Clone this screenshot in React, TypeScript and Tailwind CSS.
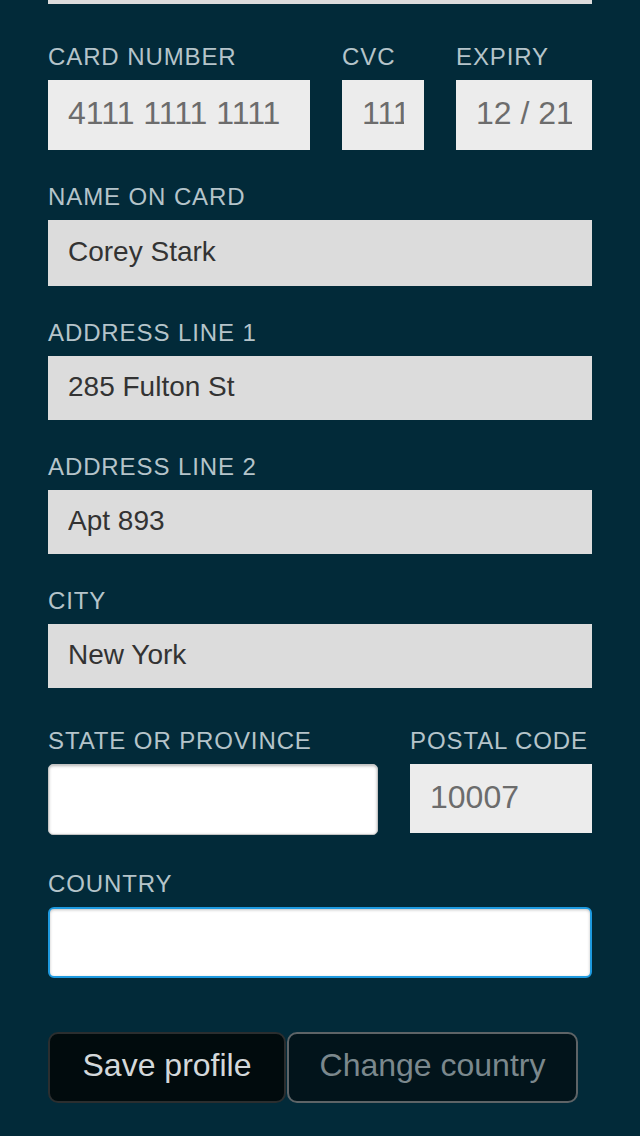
import React from "react";

const labelCls =
  "block text-[24px] leading-[28px] tracking-[0.9px] uppercase text-[#b5c4ca] mb-[9px]";

const lockedCls =
  "w-full h-[70px] bg-[#ececec] text-[#6c6c6c] text-[32px] px-5 pb-[3px] outline-none";

const filledCls =
  "w-full h-[64px] bg-[#dcdcdc] text-[#333333] text-[28px] px-5 pb-[3px] outline-none";

function Field({
  label,
  value,
  className = "",
  tall = false,
}: {
  label: string;
  value: string;
  className?: string;
  tall?: boolean;
}) {
  return (
    <div className={className}>
      <label className={labelCls}>{label}</label>
      <input
        readOnly
        value={value}
        className={tall ? filledCls.replace("h-[64px]", "h-[66px]") : filledCls}
      />
    </div>
  );
}

export default function App() {
  return (
    <div
      className="min-h-screen bg-[#022a39] px-12 pb-8"
      style={{ fontFamily: '"Liberation Sans", Arial, sans-serif' }}
    >
      {/* bottom edge of the field above, scrolled off */}
      <div className="h-[4px] bg-[#dcdcdc]" />

      <div className="mt-[39px] grid grid-cols-[262px_82px_136px] gap-x-8">
        <div>
          <label className={labelCls}>Card number</label>
          <input readOnly value="4111 1111 1111 1111" className={lockedCls} />
        </div>
        <div>
          <label className={labelCls}>CVC</label>
          <input readOnly value="111" className={lockedCls} />
        </div>
        <div>
          <label className={labelCls}>Expiry</label>
          <input readOnly value="12 / 21" className={lockedCls} />
        </div>
      </div>

      <Field label="Name on card" value="Corey Stark" className="mt-[33px]" tall />
      <Field label="Address line 1" value="285 Fulton St" className="mt-[33px]" />
      <Field label="Address line 2" value="Apt 893" className="mt-[33px]" />
      <Field label="City" value="New York" className="mt-[33px]" />

      <div className="mt-[39px] grid grid-cols-[330px_182px] gap-x-8 items-start">
        <div>
          <label className={labelCls}>State or province</label>
          <input
            readOnly
            value=""
            className="w-full h-[71px] bg-white rounded-[5px] border border-[#c4c4c4] shadow-[inset_0_1px_3px_rgba(0,0,0,0.3)] text-[28px] px-5 outline-none"
          />
        </div>
        <div>
          <label className={labelCls}>Postal code</label>
          <input readOnly value="10007" className={lockedCls.replace("h-[70px]", "h-[69px]")} />
        </div>
      </div>

      <div className="mt-[35px]">
        <label className={labelCls}>Country</label>
        <input
          readOnly
          value=""
          className="w-full h-[71px] bg-white rounded-[6px] border-2 border-[#1e9ae0] shadow-[inset_0_1px_3px_rgba(0,0,0,0.25)] text-[28px] px-5 outline-none"
        />
      </div>

      <div className="mt-[54px] flex items-center">
        <button className="w-[238px] h-[71px] pb-[5px] rounded-[10px] border-2 border-[#2b2e2f] bg-[#010b0d] text-[32px] text-[#d3d8da]">
          Save profile
        </button>
        <button className="ml-[1px] w-[291px] h-[71px] pb-[5px] rounded-[10px] border-2 border-[#5e6467] bg-[#02141b] text-[32px] text-[#7b888d]">
          Change country
        </button>
      </div>
    </div>
  );
}
